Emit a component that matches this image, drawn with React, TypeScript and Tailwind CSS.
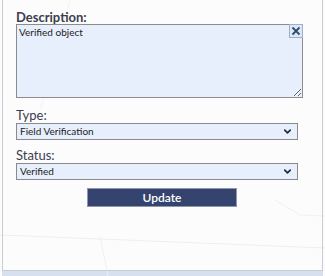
import { ChevronDown } from 'lucide-react';

export default function App() {
  return (
    <div className="relative w-[325px] h-[276px] overflow-hidden bg-[#fcfcfc] font-['Lato',sans-serif]">
      {/* faint map lines behind the panel */}
      <svg className="absolute inset-0" width="325" height="276">
        <path d="M0 235 L325 248" stroke="#eceef0" strokeWidth="1" fill="none" />
        <path d="M100 236 L108 276" stroke="#eff0f2" strokeWidth="1" fill="none" />
        <path d="M275 200 L300 215 L325 216" stroke="#eff0f2" strokeWidth="1" fill="none" />
        <path d="M70 0 L40 110" stroke="#f2f3f4" strokeWidth="1" fill="none" />
      </svg>

      <div className="relative ml-[2px] mr-[2px] h-[271px] border-l border-r border-b border-[#c8ccd4] pl-[13px] pr-[19px] pt-[10px]">
        <label className="block text-[13px] font-bold text-[#3d3d4f] leading-[14px]">Description:</label>
        <div className="relative">
          <textarea
            defaultValue="Verified object"
            className="block w-[287px] h-[74px] resize-y border border-[#8b8b8b] bg-[#e8effc] px-[2px] py-[1px] text-[10px] leading-[13px] text-[#222] outline-none font-['Lato',sans-serif]"
          />
          <button className="absolute right-[0px] top-[0px] w-[14px] h-[14px] flex items-center justify-center bg-[#dde6f3] border border-[#9fb0c6]">
            <svg width="10" height="10" viewBox="0 0 10 10">
              <path d="M1.5 1.5 L8.5 8.5 M8.5 1.5 L1.5 8.5" stroke="#2e4a73" strokeWidth="1.8" />
            </svg>
          </button>
        </div>

        <label className="block mt-[10px] text-[13px] text-[#3d3d4f] leading-[15px]">Type:</label>
        <div className="flex items-center justify-between w-[282px] h-[17px] border border-[#8b8b8b] bg-[#e8effc] pl-[3px] pr-[4px] text-[10px] text-[#222]">
          <span>Field Verification</span>
          <ChevronDown size={11} strokeWidth={3.5} color="#1f2937" />
        </div>

        <label className="block mt-[8px] text-[13px] text-[#3d3d4f] leading-[15px]">Status:</label>
        <div className="flex items-center justify-between w-[282px] h-[17px] border border-[#8b8b8b] bg-[#e8effc] pl-[3px] pr-[4px] text-[10px] text-[#222]">
          <span>Verified</span>
          <ChevronDown size={11} strokeWidth={3.5} color="#1f2937" />
        </div>

        <div className="mt-[4px] ml-[71px]">
          <button className="w-[150px] h-[19px] bg-[#34446e] border border-[#8f97ab] text-white text-[12px] font-semibold leading-[17px]">
            Update
          </button>
        </div>
      </div>
      <div className="ml-[2px] mr-[2px] h-[5px] bg-[#d6e0ee]" />
    </div>
  );
}
